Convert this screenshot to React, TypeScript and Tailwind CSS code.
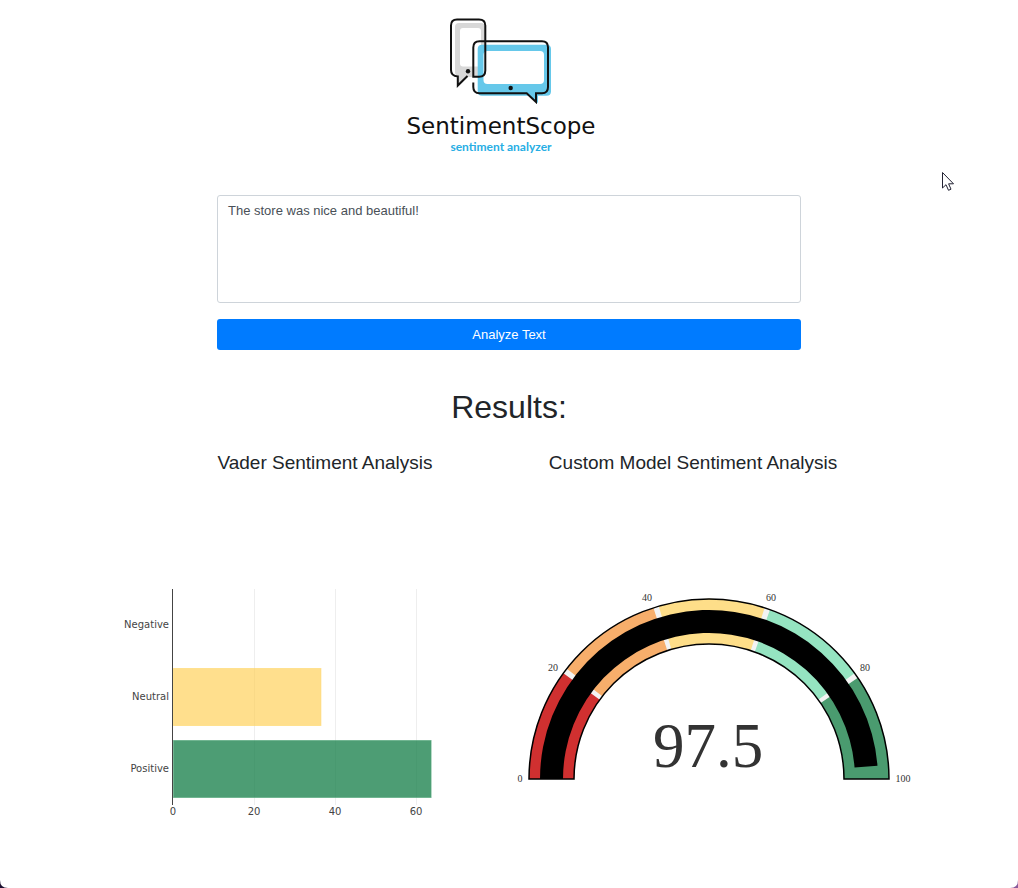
import React from "react";

const bands = [
  { from: 0, to: 20, color: "#d03030" },
  { from: 21, to: 40, color: "#f7ae6b" },
  { from: 41, to: 60, color: "#fede89" },
  { from: 61, to: 80, color: "#95e4c1" },
  { from: 81, to: 100, color: "#4a9b6f" },
];

const rows = [
  { label: "Negative", value: 0, fill: "#ffffff", edge: "#ffffff", opacity: 1 },
  { label: "Neutral", value: 36.4, fill: "#ffcc4b", edge: "#ffd76b", opacity: 0.63 },
  { label: "Positive", value: 63.6, fill: "#0b7840", edge: "#4fa577", opacity: 0.73 },
];

const CX = 200;
const CY = 219;

function point(value: number, r: number) {
  const a = Math.PI * (1 - value / 100);
  return `${(CX + r * Math.cos(a)).toFixed(2)} ${(CY - r * Math.sin(a)).toFixed(2)}`;
}

function ring(from: number, to: number, inner: number, outer: number) {
  return `M${point(from, outer)} A${outer} ${outer} 0 0 1 ${point(to, outer)} L${point(to, inner)} A${inner} ${inner} 0 0 0 ${point(from, inner)} Z`;
}

function Logo() {
  return (
    <div className="flex flex-col items-center">
      <svg viewBox="0 0 104 88" className="h-[88px] w-[104px]" aria-hidden="true">
        <path d="M10 7H32Q36 7 36 11V61H18L9 69V61Q6 60 6 56V11Q6 7 10 7Z" fill="#d8d8d8" />
        <rect x="11" y="12" width="21" height="38.500" rx="3" fill="#fff" />
        <path d="M33 28.700H97.500Q102 28.700 102 33V75.500Q102 79.700 97.500 79.700H89V87L80 79.700H33Q28.700 79.700 28.700 75.500V33Q28.700 28.700 33 28.700Z" fill="#66c8ea" />
        <rect x="34.500" y="35" width="60.500" height="33" rx="4" fill="#fff" />
        <path d="M18.500 60L8.800 69.500V60.500Q2 60 2 54V9.500Q2 3.500 8 3.500H30Q36.300 3.500 36.300 9.500V54.500Q36.300 60.800 30 60.800H24.300V31.500Q24.300 25.300 30.500 25.300H93Q99 25.300 99 31.500V71Q99 77.300 93 77.300H87V86L77.700 77.300H30.500Q24.300 77.300 24.300 71V66.500" fill="none" stroke="#111" strokeWidth="2" />
        <circle cx="19" cy="55.300" r="2.200" fill="#111" />
        <circle cx="61.700" cy="72" r="2.200" fill="#111" />
      </svg>
      <p className="mt-2 font-['DejaVu_Sans',sans-serif] text-[23px] leading-[28px] text-[#111]">SentimentScope</p>
      <p className="font-[Lato,sans-serif] text-[12px] leading-[14px] font-bold text-[#27aee4]">sentiment analyzer</p>
    </div>
  );
}

function BarChart() {
  const scale = 4.05;
  const x = (v: number) => 72 + v * scale;
  return (
    <svg viewBox="0 0 408 268" className="w-full font-['DejaVu_Sans',sans-serif]" role="img" aria-label="Vader sentiment scores">
      {[20, 40, 60].map((t) => (
        <rect key={t} x={Math.round(x(t))} y="29" width="1" height="216" fill="#eeeeee" />
      ))}
      {rows.map((r, i) =>
        r.value > 0 ? (
          <rect key={r.label} x="72.500" y={36.5 + i * 72} width={r.value * scale} height="57" fill={r.fill} fillOpacity={r.opacity} stroke={r.edge} strokeOpacity="0.6" />
        ) : null,
      )}
      <rect x="71" y="29" width="1" height="216" fill="#444" />
      {rows.map((r, i) => (
        <text key={r.label} x="68" y={68 + i * 72} textAnchor="end" fontSize="10" fill="#444">{r.label}</text>
      ))}
      {[0, 20, 40, 60].map((t) => (
        <text key={t} x={x(t)} y="255" textAnchor="middle" fontSize="10" fill="#444">{t}</text>
      ))}
    </svg>
  );
}

function Gauge() {
  const ticks = [
    { t: 0, x: 11, y: 222 },
    { t: 20, x: 44, y: 111 },
    { t: 40, x: 138, y: 41 },
    { t: 60, x: 262, y: 41 },
    { t: 80, x: 356, y: 111 },
    { t: 100, x: 394, y: 222 },
  ];
  return (
    <svg viewBox="0 0 408 268" className="w-full font-['Liberation_Serif',serif]" role="img" aria-label="Custom model sentiment score">
      <path d={ring(0, 100, 135, 180)} fill="#f3f3f3" />
      {bands.map((b) => (
        <path key={b.from} d={ring(b.from, b.to, 135, 180)} fill={b.color} />
      ))}
      <path d={ring(0, 97.5, 146, 169)} fill="#000" />
      <path d={ring(0, 100, 135, 180)} fill="none" stroke="#000" strokeWidth="1.500" />
      {ticks.map((k) => (
        <text key={k.t} x={k.x} y={k.y} textAnchor="middle" fontSize="10" fill="#333">{k.t}</text>
      ))}
      <text x="199" y="207" textAnchor="middle" fontSize="63" fill="#333">97.5</text>
    </svg>
  );
}

export default function App() {
  return (
    <div className="relative min-h-screen overflow-hidden bg-white font-['Liberation_Sans',Arial,sans-serif] text-[#212529]">
      <header className="flex justify-center pt-4 pr-4">
        <Logo />
      </header>
      <main>
        <form className="mx-auto mt-[41px] flex max-w-[584px] flex-col gap-4" onSubmit={(e) => e.preventDefault()}>
          <textarea
            aria-label="Text to analyze"
            defaultValue="The store was nice and beautiful!"
            className="block h-[108px] w-full resize-none rounded-[3px] border border-[#ced4da] px-[10px] py-[5px] text-[13px] leading-5 text-[#495057] outline-none"
          />
          <button type="submit" className="h-[31px] rounded-[3px] bg-[#007bff] text-[13px] text-white">Analyze Text</button>
        </form>
        <h1 className="mt-[37px] text-center text-[32px] leading-10">Results:</h1>
        <div className="mx-auto mt-6 grid max-w-[736px] grid-cols-2 text-center text-[19px] leading-6">
          <h2>Vader Sentiment Analysis</h2>
          <h2>Custom Model Sentiment Analysis</h2>
        </div>
        <div className="mx-auto mt-[85px] grid max-w-[816px] grid-cols-2">
          <BarChart />
          <Gauge />
        </div>
      </main>
      <svg viewBox="0 0 14 22" className="absolute top-[171px] right-[63px] h-[22px] w-[14px]" aria-hidden="true">
        <path d="M1.500 1.500V17L5 13.700L7.500 19.300L10 18.200L7.600 12.800H12.500Z" fill="#fff" stroke="#223" strokeWidth="1" />
      </svg>
      <svg viewBox="0 0 8 8" className="absolute bottom-0 left-0 h-2 w-2" aria-hidden="true">
        <path d="M0 0Q0 8 8 8H0Z" fill="#1c1030" />
      </svg>
      <svg viewBox="0 0 8 8" className="absolute right-0 bottom-0 h-2 w-2" aria-hidden="true">
        <path d="M8 0Q8 8 0 8H8Z" fill="#8a5a9a" />
      </svg>
    </div>
  );
}
